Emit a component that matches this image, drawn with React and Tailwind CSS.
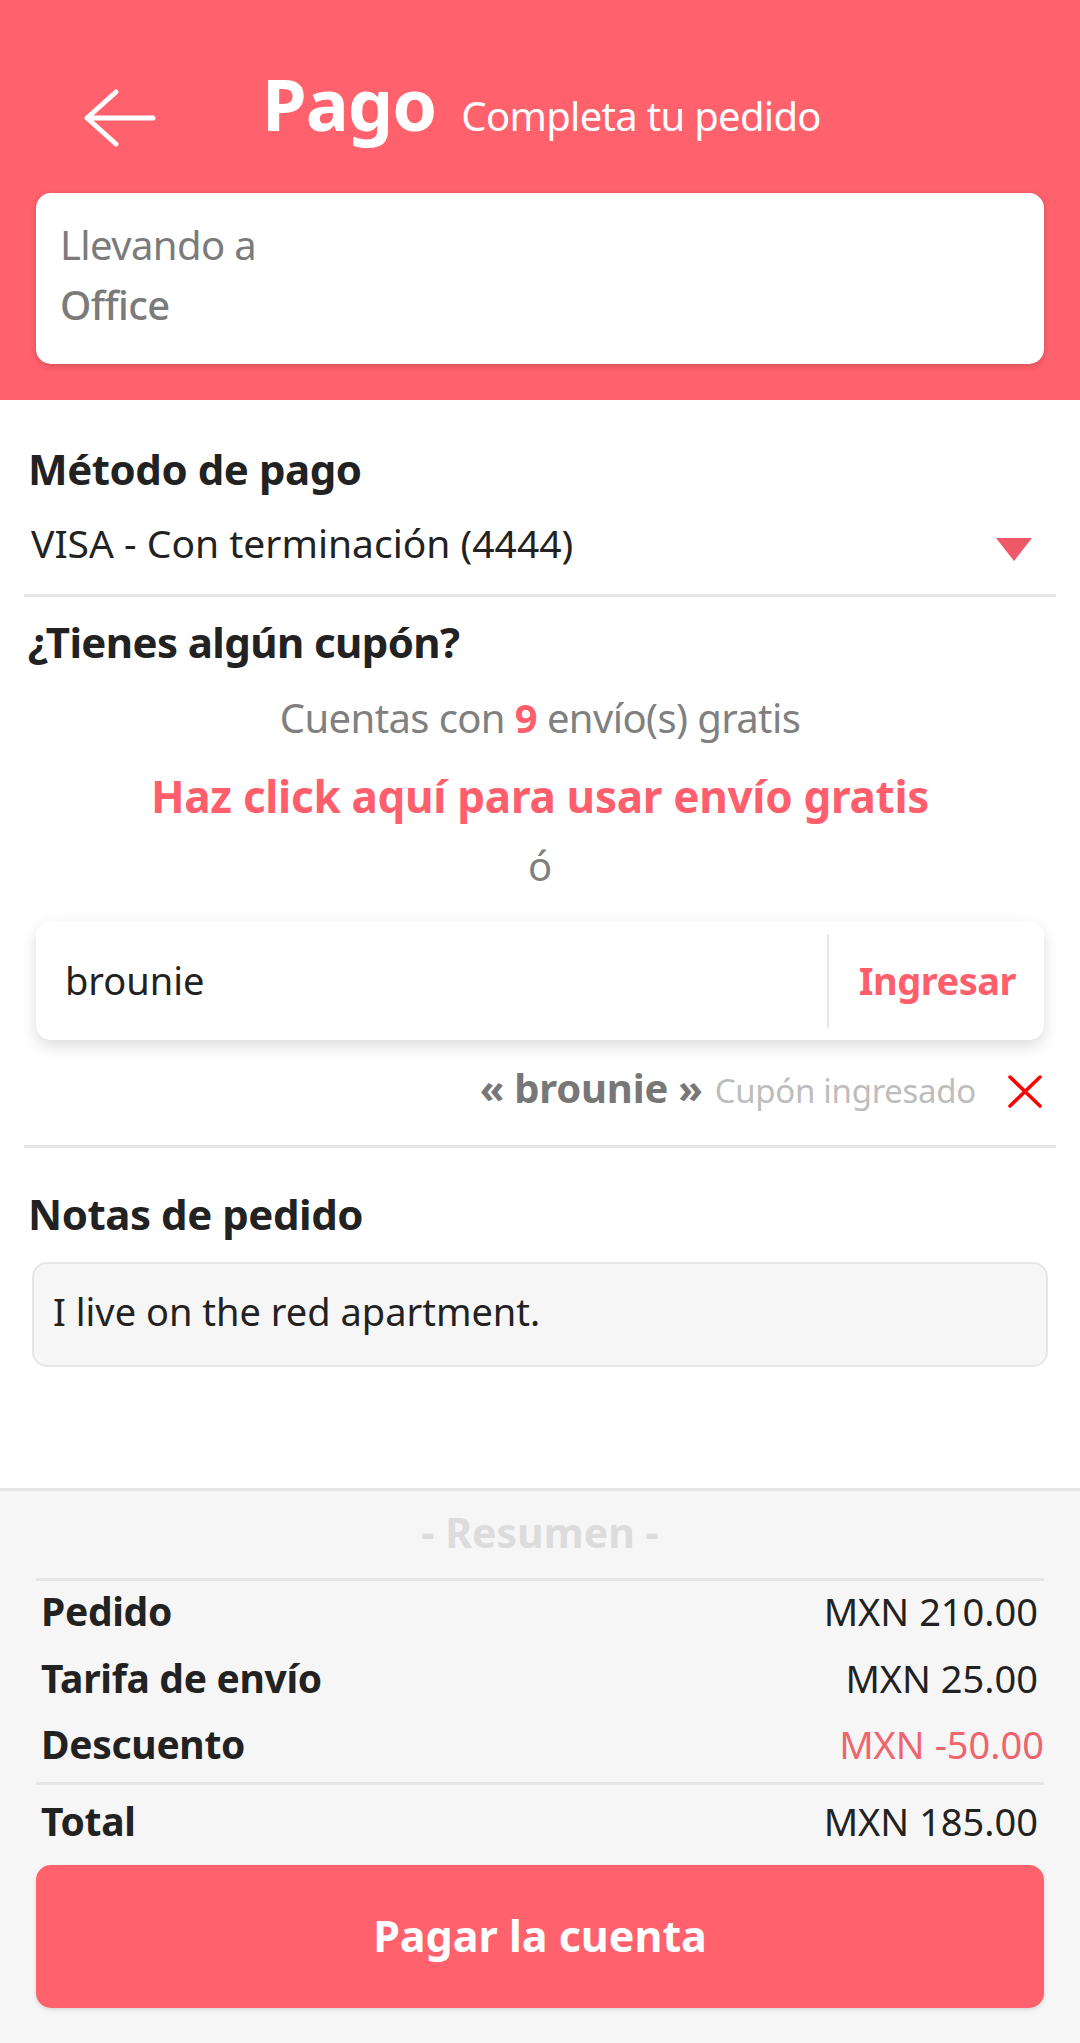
const RED = 'text-[#ff5f6d]'

function BackArrow() {
  return (
    <svg width="80" height="64" viewBox="0 0 80 64" className="ml-[80px] mt-[28px] shrink-0" fill="none">
      <path d="M7 32 H73 M36 6 L7 32 L36 58" stroke="#fff" strokeWidth="5" strokeLinecap="round" strokeLinejoin="round" />
    </svg>
  )
}

function Divider({ className = '' }) {
  return <div className={`h-[3px] bg-[#e6e6e6] ${className}`} />
}

function SummaryRow({ label, value, valueClass = 'text-[#222]', className = '' }) {
  return (
    <div className={`flex items-baseline justify-between pl-[41px] pr-[42px] leading-[56px] ${className}`}>
      <span className="text-[39px] font-bold tracking-[-0.3px] text-[#222]">{label}</span>
      <span className={`text-[38px] ${valueClass}`}>{value}</span>
    </div>
  )
}

export default function App() {
  return (
    <div className="flex h-[2043px] w-[1080px] flex-col bg-white font-['Noto_Sans',sans-serif]">
      <header className="h-[400px] shrink-0 bg-[#ff616d] pt-[58px]">
        <div className="flex h-[90px] items-start">
          <BackArrow />
          <div className="ml-[102px] flex items-baseline text-white">
            <span className="text-[72px] font-bold leading-[90px] tracking-[-1px]">Pago</span>
            <span className="ml-[25px] text-[40px] leading-[90px] tracking-[-0.7px]">Completa tu pedido</span>
          </div>
        </div>
        <div className="mx-9 mt-[45px] h-[171px] rounded-[15px] bg-white pl-6 pt-[22px] tracking-[-0.6px] shadow-[0_2px_6px_rgba(0,0,0,0.18)]">
          <p className="text-[40px] leading-[60px] text-[#7b7b7b]">Llevando a</p>
          <p className="text-[40px] font-medium leading-[60px] text-[#7b7b7b]">Office</p>
        </div>
      </header>

      <main className="flex-1">
        <h2 className="ml-[28px] mt-[41px] text-[42px] font-bold leading-[56px] tracking-[-0.45px] text-[#222]">Método de pago</h2>
        <div className="mt-[18px] flex items-start justify-between pl-[31px] pr-[48px]">
          <span className="text-[39px] leading-[56px] text-[#222]">VISA - Con terminación (4444)</span>
          <svg width="36" height="23" viewBox="0 0 36 23" className="mt-[23px]">
            <polygon points="0,0 36,0 18,23" fill="#ef5868" />
          </svg>
        </div>
        <Divider className="mx-6 mt-[23px]" />

        <h2 className="ml-[28px] mt-[17px] text-[42px] font-bold leading-[56px] tracking-[-0.6px] text-[#222]">¿Tienes algún cupón?</h2>
        <p className="mt-5 text-center text-[40px] leading-[56px] tracking-[-0.6px] text-[#808080]">
          Cuentas con <span className={`font-bold ${RED}`}>9</span> envío(s) gratis
        </p>
        <p className={`mt-[18px] text-center text-[44px] font-bold leading-[64px] tracking-[-0.3px] ${RED}`}>
          Haz click aquí para usar envío gratis
        </p>
        <p className="mt-[10px] text-center text-[40px] leading-[56px] text-[#808080]">ó</p>

        <div className="mx-9 mt-[27px] flex h-[119px] items-center rounded-[15px] bg-white shadow-[0_6px_16px_rgba(0,0,0,0.14)]">
          <span className="flex-1 pl-[29px] text-[38px] text-[#222]">brounie</span>
          <div className="h-[94px] w-[2px] bg-[#e8e8e8]" />
          <span className={`pl-[30px] pr-[28px] text-[38px] font-bold tracking-[-0.5px] ${RED}`}>Ingresar</span>
        </div>

        <div className="mt-[20px] flex items-start justify-end pr-[38px]">
          <div className="flex items-baseline leading-[56px]">
            <span className="text-[40px] font-bold tracking-[-0.2px] text-[#777]">« brounie »</span>
            <span className="ml-[12px] text-[33px] tracking-[-0.3px] text-[#bdbdbd]">Cupón ingresado</span>
          </div>
          <svg width="34" height="33" viewBox="0 0 34 33" className="ml-[32px] mt-[15px]">
            <path d="M2 2 L32 31 M32 2 L2 31" stroke="#ff0000" strokeWidth="3.5" strokeLinecap="round" />
          </svg>
        </div>
        <Divider className="mx-6 mt-[26px]" />

        <h2 className="ml-[28px] mt-[38px] text-[42px] font-bold leading-[56px] tracking-[-0.45px] text-[#222]">Notas de pedido</h2>
        <div className="mx-8 mt-5 h-[105px] rounded-[15px] border-2 border-[#e6e6e6] bg-[#f6f6f6] pl-[19px] pt-[19px]">
          <p className="text-[38px] leading-[56px] text-[#222]">I live on the red apartment.</p>
        </div>
      </main>

      <footer className="h-[555px] shrink-0 border-t-[3px] border-[#e6e6e6] bg-[#f6f6f6] pt-[13px]">
        <p className="text-center text-[41px] font-bold leading-[56px] text-[#dcdcdc]">- Resumen -</p>
        <Divider className="mx-9 mt-[18px]" />
        <SummaryRow label="Pedido" value="MXN 210.00" className="mt-[2px]" />
        <SummaryRow label="Tarifa de envío" value="MXN 25.00" className="mt-[11px]" />
        <SummaryRow label="Descuento" value="MXN -50.00" valueClass="mr-[-6px] text-[#f0646e]" className="mt-[10px]" />
        <Divider className="mx-9 mt-[10px]" />
        <SummaryRow label="Total" value="MXN 185.00" className="mt-[8px]" />
        <button className="mx-9 mt-4 flex h-[143px] w-[1008px] items-center justify-center rounded-[15px] bg-[#ff616d] text-[43px] font-bold text-white shadow-[0_2px_4px_rgba(0,0,0,0.12)]">
          Pagar la cuenta
        </button>
      </footer>
    </div>
  )
}
